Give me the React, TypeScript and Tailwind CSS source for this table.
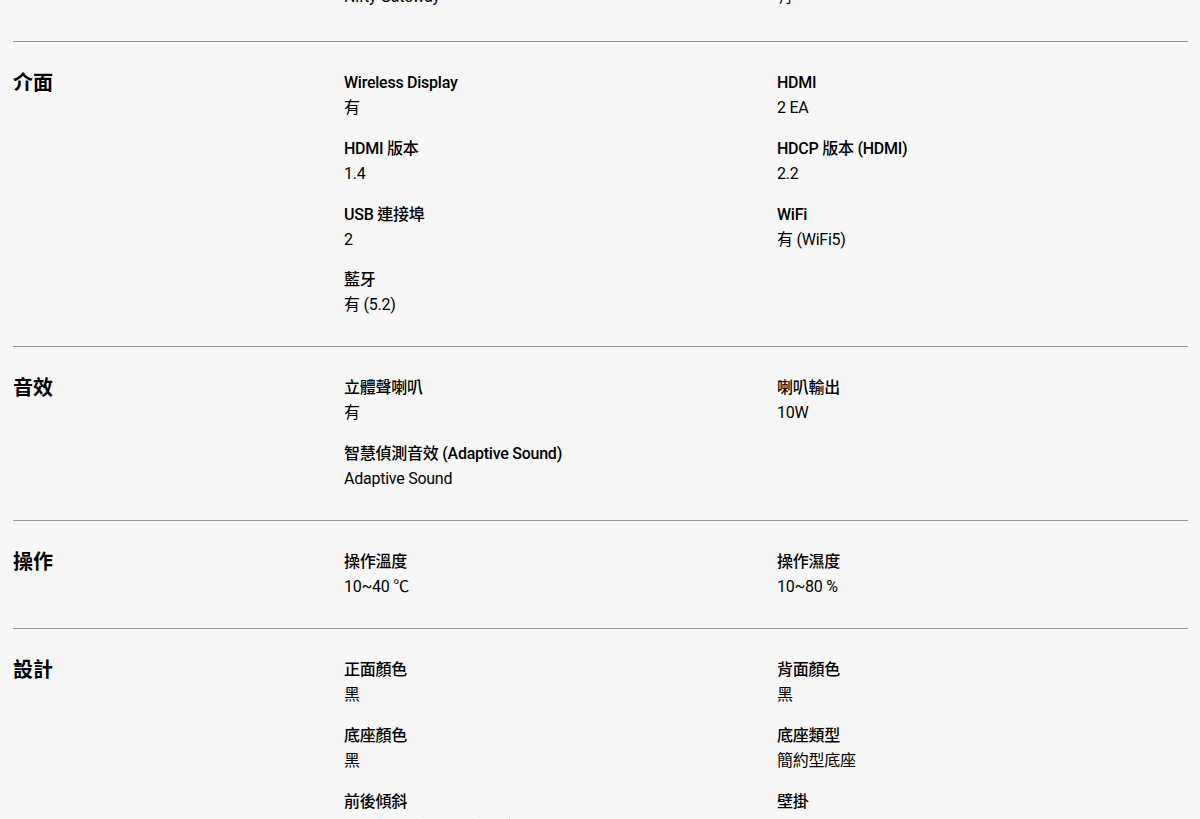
import React from "react";

type Item = { label: string; value: string };
type Section = { title: string; items: Item[] };

const sections: Section[] = [
  {
    title: "介面",
    items: [
      { label: "Wireless Display", value: "有" },
      { label: "HDMI", value: "2 EA" },
      { label: "HDMI 版本", value: "1.4" },
      { label: "HDCP 版本 (HDMI)", value: "2.2" },
      { label: "USB 連接埠", value: "2" },
      { label: "WiFi", value: "有 (WiFi5)" },
      { label: "藍牙", value: "有 (5.2)" },
    ],
  },
  {
    title: "音效",
    items: [
      { label: "立體聲喇叭", value: "有" },
      { label: "喇叭輸出", value: "10W" },
      { label: "智慧偵測音效 (Adaptive Sound)", value: "Adaptive Sound" },
    ],
  },
  {
    title: "操作",
    items: [
      { label: "操作溫度", value: "10~40 ℃" },
      { label: "操作濕度", value: "10~80 %" },
    ],
  },
  {
    title: "設計",
    items: [
      { label: "正面顏色", value: "黑" },
      { label: "背面顏色", value: "黑" },
      { label: "底座顏色", value: "黑" },
      { label: "底座類型", value: "簡約型底座" },
      { label: "前後傾斜", value: "-2.0°(±2.0°)~22.0°(±2.0°)" },
      { label: "壁掛", value: "75 x 75" },
    ],
  },
];

const font = {
  fontFamily: 'Roboto, "Noto Sans CJK TC", sans-serif',
};

export default function App() {
  return (
    <div
      className="w-[1200px] h-[819px] overflow-hidden bg-[#f7f7f7] text-black"
      style={font}
    >
      <div className="pl-[13px] pr-[12px]">
        <div className="-mt-[16px] grid grid-cols-[331px_1fr] pb-[32px] border-b border-[#999]">
          <div />
          <div className="grid grid-cols-[411px_411px] gap-x-[22px]">
            <div className="text-[16px] leading-[25px] h-[25px] tracking-[-0.25px]">Nifty Gateway</div>
            <div className="text-[16px] leading-[25px] h-[25px]">有</div>
          </div>
        </div>
        {sections.map((s) => (
          <div
            key={s.title}
            className="grid grid-cols-[331px_1fr] pt-[28px] pb-[29px] border-b border-[#999]"
          >
            <div className="text-[20px] font-bold leading-[28px] -mt-[1px]">
              {s.title}
            </div>
            <div className="grid grid-cols-[411px_411px] gap-x-[22px] gap-y-[15.75px]">
              {s.items.map((it) => (
                <div key={it.label} className="flex flex-col">
                  <div className="text-[16px] font-medium leading-[25px] h-[25px] whitespace-nowrap tracking-[-0.25px]">
                    {it.label}
                  </div>
                  <div className="text-[16px] leading-[25px] h-[25px] whitespace-nowrap tracking-[-0.25px]">
                    {it.value}
                  </div>
                </div>
              ))}
            </div>
          </div>
        ))}
      </div>
    </div>
  );
}
